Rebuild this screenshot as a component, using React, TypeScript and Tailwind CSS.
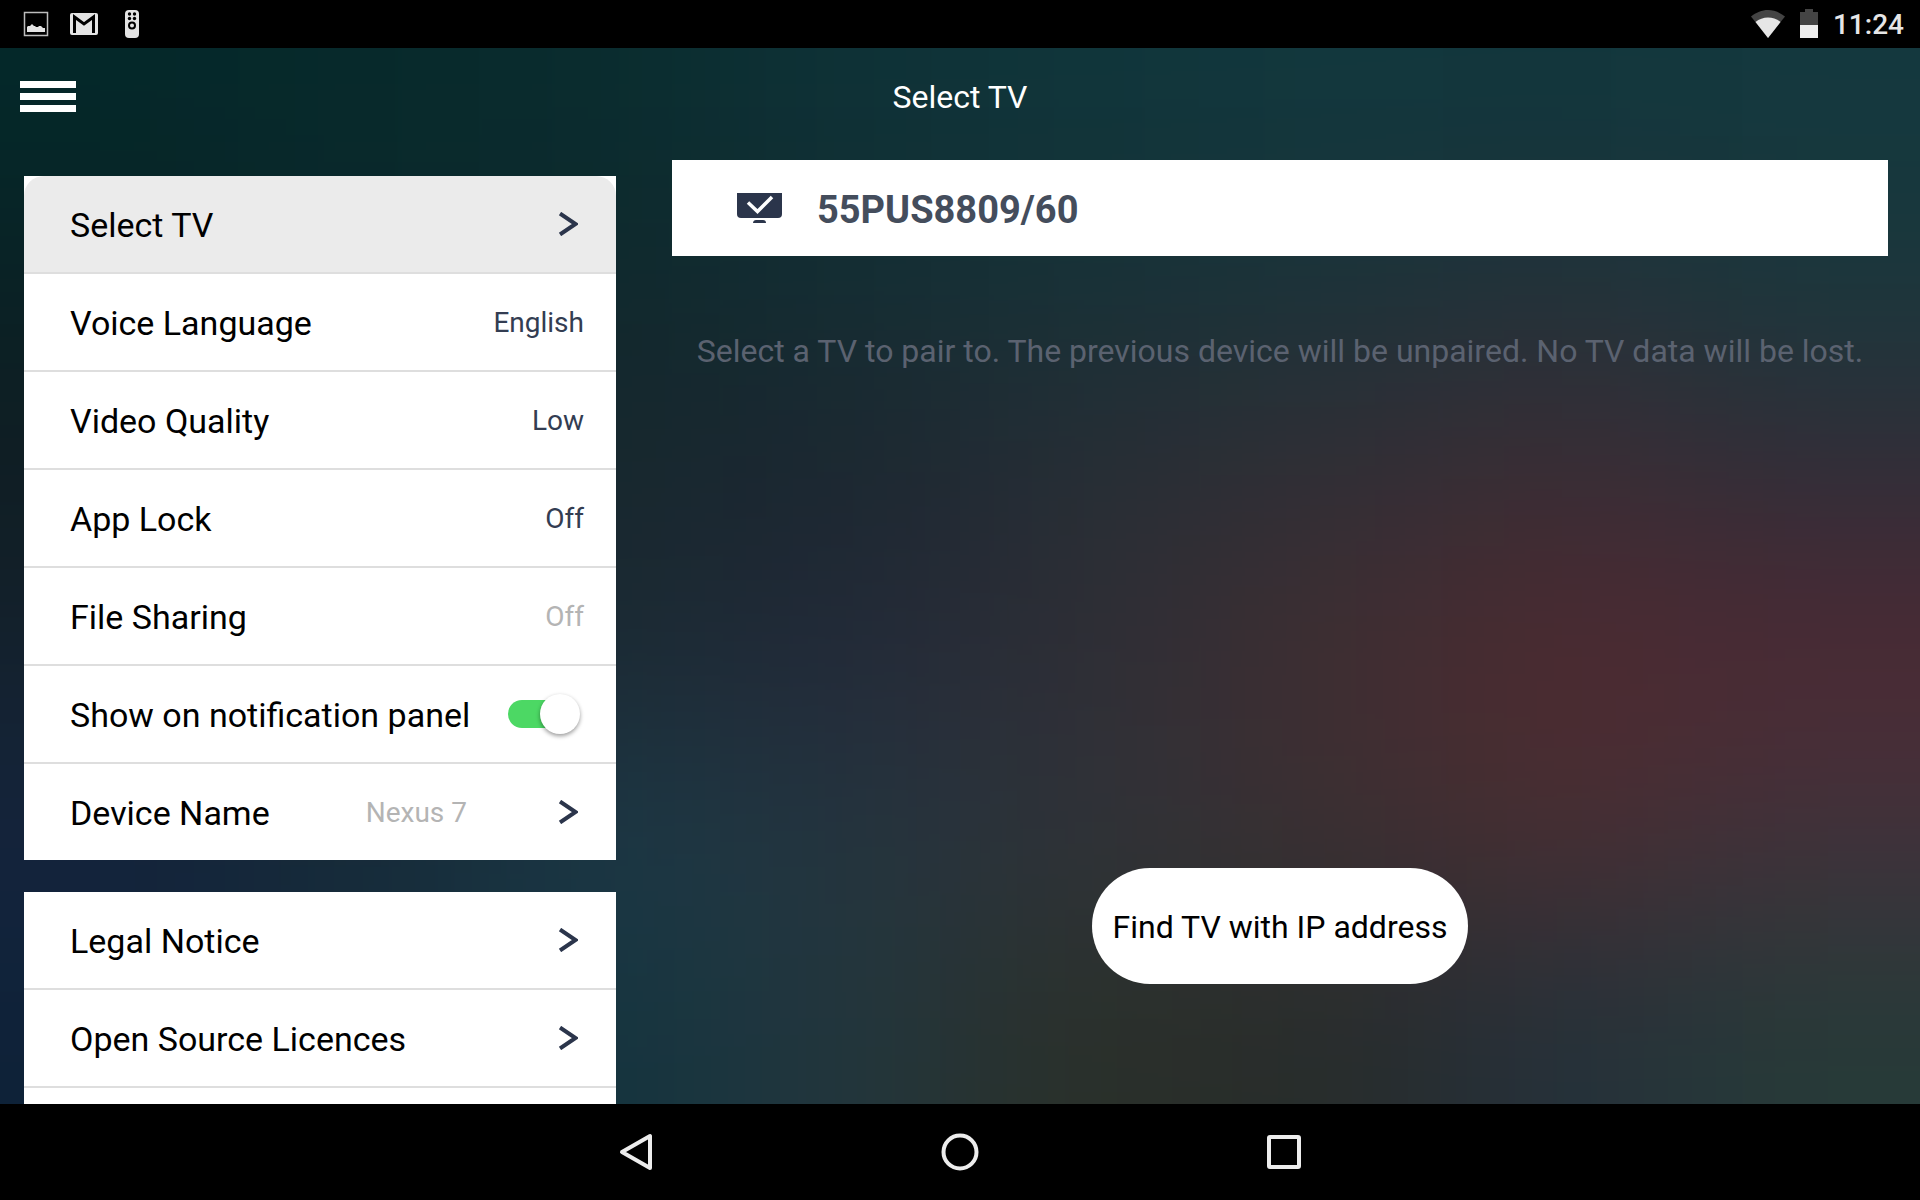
import { useState } from "react";

type Row = {
  label: string;
  value?: string;
  muted?: boolean;
  arrow?: boolean;
  toggle?: boolean;
};

const settings: Row[] = [
  { label: "Select TV", arrow: true },
  { label: "Voice Language", value: "English" },
  { label: "Video Quality", value: "Low" },
  { label: "App Lock", value: "Off" },
  { label: "File Sharing", value: "Off", muted: true },
  { label: "Show on notification panel", toggle: true },
  { label: "Device Name", value: "Nexus 7", muted: true, arrow: true },
];

const about: Row[] = [
  { label: "Legal Notice", arrow: true },
  { label: "Open Source Licences", arrow: true },
];

// colours of the wallpaper, one per 240x176 cell, blurred together
const wallpaper = [
  ["#042829", "#07292b", "#0a2c2e", "#0e3136", "#10353a", "#12373d", "#12363c", "#14383e"],
  ["#0b2024", "#0f282c", "#11272c", "#162c32", "#1a3036", "#1e3138", "#273139", "#1d363b"],
  ["#101d23", "#14252a", "#18272e", "#1c2630", "#282d35", "#332e35", "#3d2c34", "#352c38"],
  ["#14222e", "#18262f", "#1b2a34", "#232a3a", "#2e2e35", "#402d31", "#4e2a30", "#4e2a33"],
  ["#15243e", "#182c3a", "#1c3a48", "#24353f", "#2f333a", "#3a3033", "#482e32", "#40323c"],
  ["#0e2238", "#12293a", "#14343f", "#22363d", "#2a3029", "#272c2b", "#24303a", "#263a38"],
];

function Wallpaper() {
  return (
    <svg
      className="absolute inset-0 h-full w-full"
      viewBox="0 0 1920 1056"
      preserveAspectRatio="none"
      aria-hidden="true"
    >
      <filter
        id="soft"
        filterUnits="userSpaceOnUse"
        x="-400"
        y="-400"
        width="2720"
        height="1856"
        colorInterpolationFilters="sRGB"
      >
        <feGaussianBlur stdDeviation="95" />
      </filter>
      <g filter="url(#soft)" shapeRendering="crispEdges">
        {wallpaper.map((line, r) =>
          line.map((color, c) => {
            const left = c === 0 ? -400 : c * 240;
            const right = c === 7 ? 2320 : (c + 1) * 240;
            const top = r === 0 ? -400 : r * 176;
            const bottom = r === 5 ? 1456 : (r + 1) * 176;
            return (
              <rect
                key={`${r}-${c}`}
                x={left}
                y={top}
                width={right - left}
                height={bottom - top}
                fill={color}
              />
            );
          }),
        )}
      </g>
    </svg>
  );
}

function StatusBar() {
  return (
    <div className="flex h-12 shrink-0 items-center justify-between bg-black px-4">
      <div className="flex items-center gap-4 pl-1">
        <svg className="h-8 w-8" viewBox="0 0 32 32" fill="none">
          <rect x="4.500" y="4.500" width="23" height="23" stroke="#bdbdbd" strokeWidth="1.500" />
          <path d="M7 24v-5l1-1h2l2-2 2 2h1l1 1h2l1-1h2l2 2h2v4z" fill="#e4e4e4" />
        </svg>
        <svg className="h-8 w-8" viewBox="0 0 32 32" fill="none">
          <rect x="2" y="5" width="28" height="22" rx="2" fill="#e4e4e4" />
          <path d="M6.500 25V9l9.500 7 9.500-7v16" stroke="#000" strokeWidth="3" />
        </svg>
        <svg className="h-8 w-8" viewBox="0 0 32 32">
          <rect x="9" y="2" width="14" height="28" rx="4" fill="#e4e4e4" />
          <circle cx="13.500" cy="6" r="1.700" />
          <circle cx="18.500" cy="6" r="1.700" />
          <circle cx="13.500" cy="10.500" r="1.700" />
          <circle cx="18.500" cy="10.500" r="1.700" />
          <circle cx="16" cy="17.500" r="3" fill="none" stroke="#000" strokeWidth="2" />
        </svg>
      </div>
      <div className="flex items-center">
        <svg className="h-8 w-9" viewBox="0 0 36 32">
          <path d="M19 30 2 8.500C7 4.500 13 2 19 2s12 2.500 17 6.500z" fill="#444" />
          <path d="M19 30 6.500 14C10 11 14.500 9.500 19 9.500S28 11 31.500 14z" fill="#e6e6e6" />
        </svg>
        <svg className="ml-3 h-8 w-6" viewBox="0 0 24 32">
          <path d="M3 4h5V1h8v3h5v13H3z" fill="#444" />
          <path d="M3 17h18v13H3z" fill="#eee" />
        </svg>
        <time className="ml-3 pt-0.5 text-[28px] leading-8 font-medium text-[#e6e6e6]">11:24</time>
      </div>
    </div>
  );
}

function Arrow() {
  return (
    <svg className="h-6 w-5 shrink-0" viewBox="0 0 20 24" fill="none">
      <path d="M2 1.500 17.500 12 2 22.500" stroke="#2b354b" strokeWidth="4" />
    </svg>
  );
}

function SettingRow({ row, active }: { row: Row; active?: boolean }) {
  const [checked, setChecked] = useState(true);

  if (row.toggle) {
    return (
      <label className="flex h-24 w-full cursor-pointer items-center justify-between pr-8 pl-[46px]">
        <span className="pt-0.5 text-[34px] leading-10">{row.label}</span>
        <span className="relative flex h-10 w-[76px] items-center">
          <input
            type="checkbox"
            role="switch"
            checked={checked}
            onChange={(e) => setChecked(e.target.checked)}
            className="peer h-7 w-[60px] appearance-none rounded-full bg-gray-300 checked:bg-[#4cd864]"
          />
          <span className="pointer-events-none absolute left-0 h-10 w-10 rounded-full bg-white shadow-[0_2px_4px_rgba(0,0,0,0.4)] peer-checked:left-8" />
        </span>
      </label>
    );
  }

  return (
    <button
      type="button"
      className={`flex h-24 w-full cursor-pointer items-center pl-[46px] text-left ${
        row.arrow ? "pr-[38px]" : "pr-8"
      } ${active ? "rounded-t-[20px] bg-[#ebebeb]" : ""}`}
    >
      <span className="flex-1 pt-0.5 text-[34px] leading-10">{row.label}</span>
      {row.value && (
        <span
          className={`pt-0.5 text-[28px] leading-8 ${row.muted ? "text-[#b4b4b4]" : "text-[#333d52]"} ${
            row.arrow ? "mr-[91px]" : ""
          }`}
        >
          {row.value}
        </span>
      )}
      {row.arrow && <Arrow />}
    </button>
  );
}

export default function App() {
  return (
    <div className="flex h-screen flex-col overflow-hidden bg-black font-[Roboto,sans-serif]">
      <StatusBar />

      <div className="relative min-h-0 flex-1 overflow-hidden">
        <Wallpaper />

        <div className="relative flex h-full flex-col">
          <header className="grid h-24 shrink-0 grid-cols-[1fr_auto_1fr] items-center px-5">
            <button type="button" aria-label="Menu" className="flex w-14 cursor-pointer flex-col gap-[5px]">
              <span className="h-[7px] bg-white" />
              <span className="h-[7px] bg-white" />
              <span className="h-[7px] bg-white" />
            </button>
            <h1 className="pt-0.5 text-[32px] leading-10 text-white">Select TV</h1>
          </header>

          <div className="flex min-h-0 flex-1">
            <nav className="flex w-1/3 flex-col gap-8 overflow-hidden px-6 pt-8">
              <ul className="shrink-0 divide-y-2 divide-[#dedede] bg-white">
                {settings.map((row, i) => (
                  <li key={row.label}>
                    <SettingRow row={row} active={i === 0} />
                  </li>
                ))}
              </ul>
              <ul className="shrink-0 divide-y-2 divide-[#dedede] bg-white">
                {about.map((row) => (
                  <li key={row.label}>
                    <SettingRow row={row} />
                  </li>
                ))}
                <li className="h-24" />
              </ul>
            </nav>

            <main className="flex flex-1 flex-col items-center px-8 pt-4 pb-[120px]">
              <button
                type="button"
                className="flex h-24 w-full shrink-0 cursor-pointer items-center gap-[34px] bg-white px-16"
              >
                <svg className="h-8 w-[47px]" viewBox="0 0 47 32" fill="none">
                  <path d="M1 1h45v21a4 4 0 0 1-4 4H5a4 4 0 0 1-4-4z" fill="#2b354b" />
                  <path d="M12 10.500l9.500 9L36 5" stroke="#fff" strokeWidth="3.500" />
                  <path d="M17 31c0-2 1.500-3 3-3h7c2 0 3 1 3 3z" fill="#2b354b" />
                </svg>
                <span className="pt-1 text-[38px] leading-12 font-bold text-[#444d5c]">55PUS8809/60</span>
              </button>

              <p className="pt-[75px] text-center text-[32px] leading-10 text-[#5b6270]">
                Select a TV to pair to. The previous device will be unpaired. No TV data will be lost.
              </p>

              <button
                type="button"
                className="mt-auto h-[116px] cursor-pointer rounded-full bg-white px-[21px] pt-0.5 text-[32px] leading-10 text-black"
              >
                Find TV with IP address
              </button>
            </main>
          </div>
        </div>
      </div>

      <footer className="flex h-24 shrink-0 items-center justify-center gap-[276px] bg-black">
        <button type="button" aria-label="Back" className="cursor-pointer">
          <svg className="h-12 w-12" viewBox="0 0 48 48" fill="none">
            <path d="M38 8v32L10 24z" stroke="#ededed" strokeWidth="4" strokeLinejoin="round" />
          </svg>
        </button>
        <button type="button" aria-label="Home" className="cursor-pointer">
          <svg className="h-12 w-12" viewBox="0 0 48 48" fill="none">
            <circle cx="24" cy="24" r="16.500" stroke="#ededed" strokeWidth="4" />
          </svg>
        </button>
        <button type="button" aria-label="Recent apps" className="cursor-pointer">
          <svg className="h-12 w-12" viewBox="0 0 48 48" fill="none">
            <rect x="9" y="9" width="30" height="30" rx="1" stroke="#ededed" strokeWidth="4" />
          </svg>
        </button>
      </footer>
    </div>
  );
}
